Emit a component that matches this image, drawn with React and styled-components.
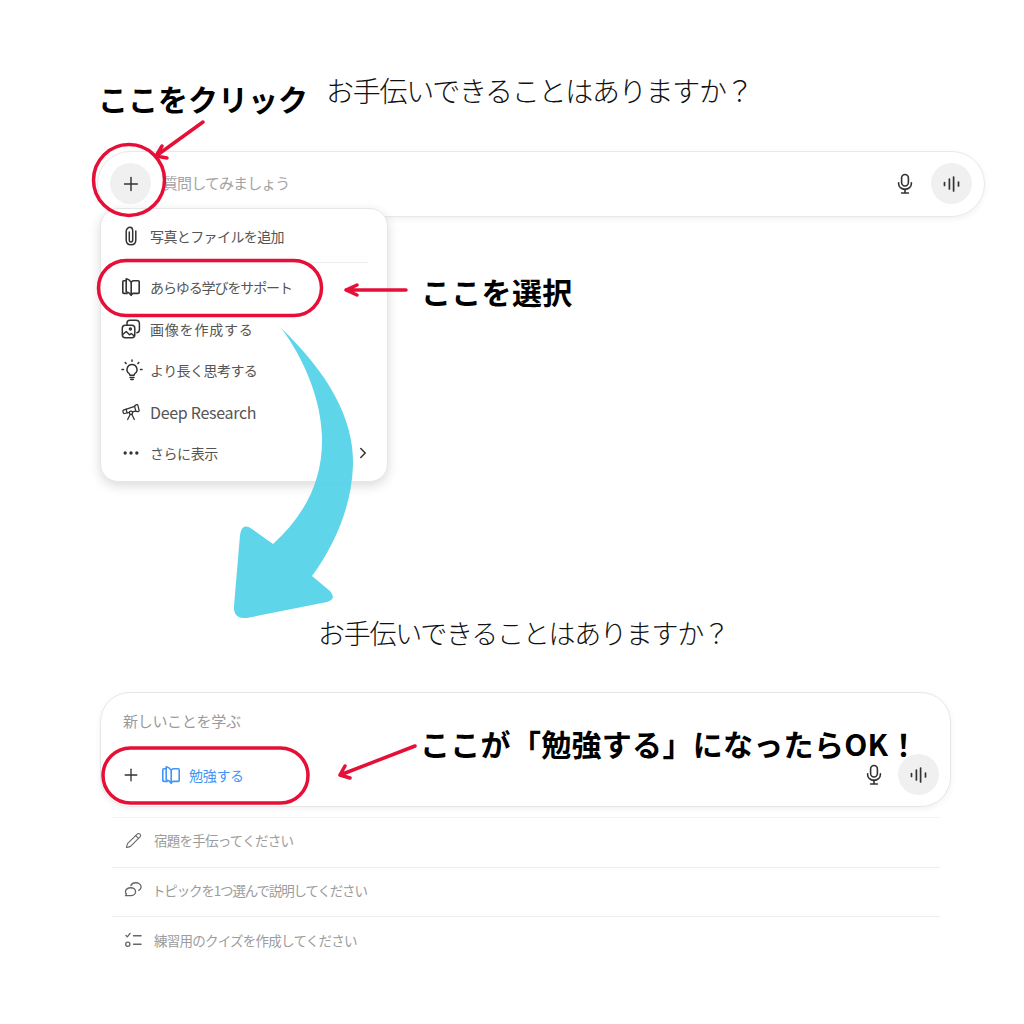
import { ChevronRight, Ellipsis, Pencil, Plus, Telescope } from 'lucide-react';
import styled, { createGlobalStyle } from 'styled-components';

const GlobalStyle = createGlobalStyle`
  html, body {
    margin: 0;
    padding: 0;
    background: #fff;
  }
  body {
    font-family: "Noto Sans CJK JP", "Noto Sans", sans-serif;
  }
`;

const PaperclipIcon = () => (
  <svg width="20" height="20" viewBox="0 0 20 20" fill="none" stroke="currentColor" strokeWidth="1.5" strokeLinecap="round">
    <path d="M8.300 6v8c0 1.300.7 2 1.700 2s1.700-.7 1.700-2V4.800C11.700 2.700 10.500 1.300 9 1.300S5.200 2.700 5.200 5.200v8.800c0 3 1.900 4.800 4.800 4.800s4.800-1.800 4.800-4.800V5" />
  </svg>
);

const BookIcon = () => (
  <svg width="20" height="20" viewBox="0 0 20 20" fill="none" stroke="currentColor" strokeWidth="1.600" strokeLinejoin="round">
    <path d="M10.200 5.400C9 3.400 7.600 2.200 5.200 1.800v13c2.400.4 3.800 1.600 5 3.600V5.400Z" />
    <path d="M5.200 3.800H2.800c-.6 0-1 .4-1 1v10.600c0 .6.400 1 1 1h4" />
    <path d="M10.200 5C11 4.200 11.800 3.800 12.800 3.800h4.400c.6 0 1 .4 1 1v10.600c0 .6-.4 1-1 1h-4.400c-1 0-1.800.4-2.600 1.200" />
  </svg>
);

const PicturesIcon = () => (
  <svg width="20" height="20" viewBox="0 0 20 20" fill="none" stroke="currentColor" strokeWidth="1.500" strokeLinecap="round" strokeLinejoin="round">
    <rect x="1.300" y="6.200" width="12.500" height="12.500" rx="3" />
    <path d="M6 6V4.200c0-1.600 1.200-2.900 2.900-2.900h6c2 0 3.500 1.500 3.500 3.500v6c0 1.500-1 2.700-2.500 3" />
    <path d="M1.800 15.500l3.400-3 3.300 3.300 1.700-1.300 3 2.300" />
    <circle cx="9.400" cy="10" r="1" />
  </svg>
);

const IdeaIcon = () => (
  <svg width="22" height="22" viewBox="0 0 22 22" fill="none" stroke="currentColor" strokeWidth="1.500" strokeLinecap="round" strokeLinejoin="round">
    <path d="M11 5.500a5 5 0 0 0-3 9c.6.500.9 1 .9 1.700h4.200c0-.7.300-1.200.9-1.700a5 5 0 0 0-3-9Z" />
    <path d="M9 18.500h4M9.800 20.500h2.400" />
    <path d="M11 .9v1.300M4.200 3.600l.9.900M17.800 3.600l-.9.900M1 10.500h1.500M19.500 10.500H21" />
  </svg>
);

const MicIcon = () => (
  <svg width="18" height="22" viewBox="0 0 18 22" fill="none" stroke="currentColor" strokeWidth="1.600" strokeLinecap="round">
    <rect x="5.600" y="1.500" width="6.800" height="11.500" rx="3.400" />
    <path d="M2.600 9.800v.6c0 3.500 2.800 6 6.400 6s6.400-2.500 6.400-6v-.6" />
    <path d="M9 16.400v3.400M5.600 20h6.800" />
  </svg>
);

const VoiceIcon = () => (
  <svg width="18" height="16" viewBox="0 0 18 16" fill="none" stroke="currentColor" strokeWidth="1.700" strokeLinecap="round">
    <path d="M1.500 6.600v2.800M6.400 3v10M10.600 1v14M15.500 6v4" />
  </svg>
);

const BubblesIcon = () => (
  <svg width="19" height="18" viewBox="0 0 20 18" fill="none" stroke="currentColor" strokeWidth="1.400" strokeLinecap="round" strokeLinejoin="round">
    <path d="M7 6.600c3 0 5.200 1.800 5.200 4.200S10 15 7 15H1.600l1-1.800C1.800 12.500 1.500 11.700 1.500 10.800 1.500 8.400 4 6.600 7 6.600Z" />
    <path d="M7.200 4.400C8 2.600 10 1.400 12.400 1.400c3 0 5.600 1.900 5.600 4.400 0 1.500-.9 2.800-2.400 3.600" />
  </svg>
);

const QuizIcon = () => (
  <svg width="19" height="18" viewBox="0 0 20 18" fill="none" stroke="currentColor" strokeWidth="1.400" strokeLinecap="round" strokeLinejoin="round">
    <path d="M2 4.200l1.500 1.500L6.400 2M10 4.500h8M10 13.500h8" />
    <circle cx="4" cy="13.500" r="2.200" />
  </svg>
);

function Annotations() {
  return (
    <St.Overlay viewBox="0 0 1024 1024">
      <path
        d="M281 328C330 375 354 420 353 465C352 505 335 545 312 576L330 591Q337 599 327 602L247 618Q233 619 234 606L240 535Q242 522 252 529L273 544C305 515 323 480 322 437C321 400 305 360 281 328Z"
        fill="#56d3e9"
        fillOpacity="0.95"
      />
      <g fill="none" stroke="#e60f37" strokeWidth="3.500" strokeLinecap="round" strokeLinejoin="round">
        <circle cx="129" cy="180" r="35.500" />
        <rect x="98.500" y="260.500" width="223" height="55" rx="27.500" />
        <rect x="103" y="748" width="205" height="55" rx="27.500" />
        <path d="M203 122L156 156M156 156L167 158M156 156L162 146" />
        <path d="M406 290H346M346 290L357 285M346 290L357 295" />
        <path d="M415 746L340 775M340 775L350 778M340 775L345 766" />
      </g>
    </St.Overlay>
  );
}

function App() {
  return (
    <St.Page>
      <GlobalStyle />
      <St.TopSection>
        <St.Heading>お手伝いできることはありますか？</St.Heading>
        <St.SearchBar>
          <St.RoundButton>
            <Plus size={22} strokeWidth={1.6} />
          </St.RoundButton>
          <St.Placeholder>質問してみましょう</St.Placeholder>
          <St.BarActions>
            <MicIcon />
            <St.RoundButton>
              <VoiceIcon />
            </St.RoundButton>
          </St.BarActions>
          <St.Menu>
            <St.MenuItem $spacing={-0.6}>
              <PaperclipIcon />
              写真とファイルを追加
            </St.MenuItem>
            <St.Divider />
            <St.MenuItem $spacing={-1.1}>
              <BookIcon />
              あらゆる学びをサポート
            </St.MenuItem>
            <St.MenuItem $spacing={0.8}>
              <PicturesIcon />
              画像を作成する
            </St.MenuItem>
            <St.MenuItem $spacing={-0.55} $pull={-2}>
              <IdeaIcon />
              より長く思考する
            </St.MenuItem>
            <St.MenuItem $size={16} $spacing={-0.3}>
              <Telescope size={20} strokeWidth={1.5} />
              Deep Research
            </St.MenuItem>
            <St.MenuItem>
              <Ellipsis size={20} strokeWidth={2} />
              さらに表示
              <St.MenuArrow>
                <ChevronRight size={18} strokeWidth={2} />
              </St.MenuArrow>
            </St.MenuItem>
          </St.Menu>
        </St.SearchBar>
      </St.TopSection>

      <St.BottomSection>
        <St.Heading $left={318} $size={27} $spacing={-1.25} $lower>
          お手伝いできることはありますか？
        </St.Heading>
        <St.ComposerCard>
          <St.ComposerHint>新しいことを学ぶ</St.ComposerHint>
          <St.ComposerRow>
            <Plus size={20} strokeWidth={1.6} />
            <St.StudyChip>
              <BookIcon />
              勉強する
            </St.StudyChip>
            <St.BarActions $gap={15}>
              <MicIcon />
              <St.RoundButton>
                <VoiceIcon />
              </St.RoundButton>
            </St.BarActions>
          </St.ComposerRow>
        </St.ComposerCard>
        <St.SuggestionList>
          <St.Suggestion>
            <Pencil size={17} strokeWidth={1.5} />
            宿題を手伝ってください
          </St.Suggestion>
          <St.Suggestion $spacing={-1.15} $gap={9}>
            <BubblesIcon />
            トピックを1つ選んで説明してください
          </St.Suggestion>
          <St.Suggestion>
            <QuizIcon />
            練習用のクイズを作成してください
          </St.Suggestion>
        </St.SuggestionList>
      </St.BottomSection>

      <Annotations />
      <St.Callout $left={98} $top={77}>ここをクリック</St.Callout>
      <St.Callout $left={421} $top={270} $spacing={0.3}>ここを選択</St.Callout>
      <St.Callout $left={420} $top={722} $spacing={0.3}>ここが「勉強する」になったらOK！</St.Callout>
    </St.Page>
  );
}

export default App;

const St = {
  Page: styled.div`
    position: relative;
    width: 1024px;
    height: 1024px;
    overflow: hidden;
    background: #fff;
  `,
  TopSection: styled.section`
    display: flex;
    flex-direction: column;
    height: 611px;
    padding: 70px 39px 0 97px;
    box-sizing: border-box;
  `,
  BottomSection: styled.section`
    display: flex;
    flex-direction: column;
    padding: 0 73px 0 100px;
  `,
  Heading: styled.h1`
    margin: ${(p) => (p.$lower ? 2 : 0)}px 0 ${(p) => (p.$lower ? 39 : 41)}px ${(p) => (p.$left ? p.$left - 100 : 229)}px;
    height: 40px;
    font-size: ${(p) => p.$size || 28}px;
    font-weight: 300;
    line-height: 40px;
    letter-spacing: ${(p) => p.$spacing ?? -1.25}px;
    color: #111;
    white-space: nowrap;
  `,
  SearchBar: styled.div`
    position: relative;
    display: flex;
    align-items: center;
    height: 66px;
    padding: 0 12px 1px;
    border: 1px solid #e8e8e8;
    border-radius: 33px;
    box-shadow: 0 2px 6px rgba(0, 0, 0, 0.06);
    box-sizing: border-box;
    color: #333;
  `,
  RoundButton: styled.span`
    display: flex;
    align-items: center;
    justify-content: center;
    width: 41px;
    height: 41px;
    border-radius: 50%;
    background: #f0f0f0;
  `,
  Placeholder: styled.span`
    margin-left: 12px;
    font-size: 15px;
    letter-spacing: -0.900px;
    color: #a3a3a3;
    transform: translateY(-1px);
  `,
  BarActions: styled.div`
    display: flex;
    align-items: center;
    gap: ${(p) => p.$gap || 17}px;
    margin-left: auto;
    color: #333;
  `,
  Menu: styled.div`
    position: absolute;
    top: 56px;
    left: 2px;
    z-index: 1;
    width: 288px;
    height: 274px;
    padding: 6px 19px 0 20px;
    border: 1px solid #e6e6e6;
    border-radius: 18px;
    background: #fff;
    box-shadow: 0 4px 12px rgba(0, 0, 0, 0.14);
    box-sizing: border-box;
  `,
  MenuItem: styled.div`
    display: flex;
    align-items: center;
    gap: ${(p) => 9 + (p.$pull || 0)}px;
    height: 41.500px;
    font-size: ${(p) => p.$size || 14}px;
    letter-spacing: ${(p) => p.$spacing ?? -0.45}px;
    color: #555;
    white-space: nowrap;

    svg {
      flex: none;
      color: #333;
    }
  `,
  MenuArrow: styled.span`
    display: flex;
    margin-left: auto;
    margin-right: -4px;
  `,
  Divider: styled.hr`
    width: 100%;
    margin: 5px 0 4px;
    border: 0;
    border-top: 1px solid #ececec;
  `,
  ComposerCard: styled.div`
    display: flex;
    flex-direction: column;
    height: 115px;
    padding: 16px 11px 0 22px;
    border: 1px solid #e6e6e6;
    border-radius: 30px;
    box-shadow: 0 2px 6px rgba(0, 0, 0, 0.06);
    box-sizing: border-box;
  `,
  ComposerHint: styled.div`
    font-size: 15px;
    line-height: 24px;
    letter-spacing: -0.300px;
    color: #9a9a9a;
  `,
  ComposerRow: styled.div`
    display: flex;
    align-items: center;
    gap: 20px;
    margin: 21px 0 0 -2px;
    color: #333;
  `,
  StudyChip: styled.span`
    display: flex;
    align-items: center;
    gap: 8px;
    font-size: 14px;
    letter-spacing: -0.300px;
    color: #3f96f5;
  `,
  SuggestionList: styled.div`
    display: flex;
    flex-direction: column;
    margin: 10px 11px 0 12px;
    border-top: 1px solid #f4f4f4;
  `,
  Suggestion: styled.div`
    display: flex;
    align-items: center;
    gap: ${(p) => p.$gap || 11}px;
    height: 49.500px;
    padding-bottom: 4px;
    box-sizing: border-box;
    border-bottom: 1px solid #ececec;
    font-size: 13.500px;
    letter-spacing: ${(p) => p.$spacing ?? -0.75}px;
    color: #9c9c9c;

    svg {
      flex: none;
      width: 19px;
      margin-left: 12px;
      color: #666;
    }

    &:last-child {
      border-bottom: 0;
    }
  `,
  Overlay: styled.svg`
    position: absolute;
    top: 0;
    left: 0;
    z-index: 2;
    width: 1024px;
    height: 1024px;
    pointer-events: none;
  `,
  Callout: styled.div`
    position: absolute;
    top: ${(p) => p.$top}px;
    left: ${(p) => p.$left}px;
    z-index: 3;
    font-size: 30px;
    font-weight: 700;
    line-height: 42px;
    letter-spacing: ${(p) => p.$spacing || 0}px;
    color: #000;
    white-space: nowrap;
  `,
};
